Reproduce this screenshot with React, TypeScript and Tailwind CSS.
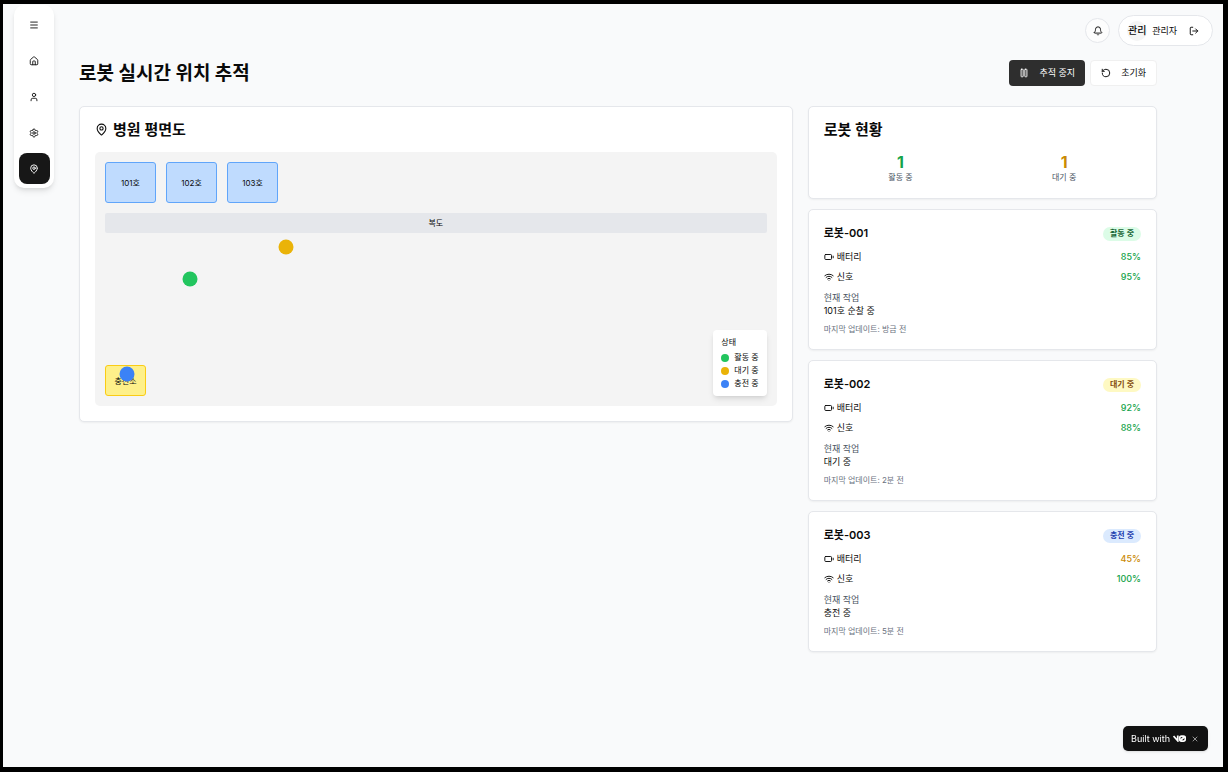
import React from "react";
import {
  Battery,
  Bell,
  House,
  LogOut,
  MapPin,
  Menu,
  Pause,
  RotateCcw,
  Settings,
  User,
  Wifi,
  X,
} from "lucide-react";

type Status = "active" | "idle" | "charging";

interface Robot {
  id: string;
  name: string;
  status: Status;
  battery: number;
  signal: number;
  task: string;
  updated: string;
  x: number;
  y: number;
}

const statuses: Record<Status, { label: string; dot: string; badge: string }> = {
  active: { label: "활동 중", dot: "bg-[#22c55e]", badge: "bg-[#dcfce7] text-[#166534]" },
  idle: { label: "대기 중", dot: "bg-[#eab308]", badge: "bg-[#fef9c3] text-[#854d0e]" },
  charging: { label: "충전 중", dot: "bg-[#3b82f6]", badge: "bg-[#dbeafe] text-[#1e40af]" },
};

const robots: Robot[] = [
  { id: "1", name: "로봇-001", status: "active", battery: 85, signal: 95, task: "101호 순찰 중", updated: "방금 전", x: 14, y: 50 },
  { id: "2", name: "로봇-002", status: "idle", battery: 92, signal: 88, task: "대기 중", updated: "2분 전", x: 28, y: 37.5 },
  { id: "3", name: "로봇-003", status: "charging", battery: 45, signal: 100, task: "충전 중", updated: "5분 전", x: 4.7, y: 87.5 },
];

const rooms = ["101호", "102호", "103호"];

const navItems = [
  { label: "메뉴", Icon: Menu },
  { label: "홈", Icon: House },
  { label: "사용자", Icon: User },
  { label: "설정", Icon: Settings },
  { label: "위치 추적", Icon: MapPin, current: true },
];

const cardClass = "rounded-[5px] border border-[#e5e7eb] bg-white p-[15px] shadow-xs";

function Sidebar() {
  return (
    <nav className="mt-px ml-[11px] flex w-10 shrink-0 flex-col items-center gap-[5px] self-start rounded-[10px] bg-white py-1 shadow-md">
      {navItems.map(({ label, Icon, current }) => (
        <button
          key={label}
          type="button"
          aria-label={label}
          className={
            current
              ? "flex size-[31px] items-center justify-center rounded-[8px] bg-[#171717] text-white"
              : "flex size-[31px] items-center justify-center rounded-[8px] text-[#171717]"
          }
        >
          <Icon size={10} strokeWidth={2.25} />
        </button>
      ))}
    </nav>
  );
}

function Header() {
  return (
    <header className="flex items-center justify-end gap-2 pr-[10px]">
      <button
        type="button"
        aria-label="알림"
        className="flex size-[25px] items-center justify-center rounded-full border border-[#e5e7eb] bg-white/60"
      >
        <Bell size={10} strokeWidth={2.25} />
      </button>
      <div className="flex h-[31px] items-center rounded-full border border-[#e5e7eb] bg-white pr-[13px] pl-2">
        <span className="flex size-5 items-center justify-center rounded-full bg-[#f5f5f5] text-[10px] font-medium whitespace-nowrap">
          관리
        </span>
        <span className="ml-[5px] text-[9px]">관리자</span>
        <button type="button" aria-label="로그아웃" className="ml-3">
          <LogOut size={10} strokeWidth={2.25} />
        </button>
      </div>
    </header>
  );
}

function FloorPlan() {
  return (
    <section className={`${cardClass} col-span-2 self-start`}>
      <h2 className="flex items-center gap-[5px] text-[15px] leading-[15px] font-semibold">
        <MapPin size={13} />
        병원 평면도
      </h2>
      <div className="relative mt-[15px] flex h-[254px] flex-col rounded-[5px] bg-[#f4f4f4] p-[10px] text-[8px]">
        <div className="flex gap-[10px]">
          {rooms.map((room) => (
            <div
              key={room}
              className="flex h-[41px] w-[51px] items-center justify-center rounded-[3px] border border-[#60a5fa] bg-[#bfdbfe]"
            >
              {room}
            </div>
          ))}
        </div>
        <div className="mt-[10px] flex h-5 items-center justify-center rounded-[2px] bg-[#e5e7eb]">복도</div>
        <div className="mt-auto flex items-end justify-between">
          <div className="flex h-[31px] w-[41px] items-center justify-center rounded-[3px] border border-[#facc15] bg-[#fef08a]">
            충전소
          </div>
          <div className="rounded-[4px] bg-white px-2 py-[6px] shadow-md">
            <div className="leading-[13px]">상태</div>
            <ul className="mt-[2px]">
              {Object.values(statuses).map((status) => (
                <li key={status.label} className="flex items-center gap-[5px] leading-[13px]">
                  <span className={`size-2 rounded-full ${status.dot}`} />
                  {status.label}
                </li>
              ))}
            </ul>
          </div>
        </div>
        {robots.map((robot) => (
          <span
            key={robot.id}
            role="img"
            aria-label={robot.name}
            className={`absolute size-[15px] -translate-x-1/2 -translate-y-1/2 rounded-full ${statuses[robot.status].dot}`}
            style={{ left: `${robot.x}%`, top: `${robot.y}%` }}
          />
        ))}
      </div>
    </section>
  );
}

function Summary() {
  return (
    <section className={cardClass}>
      <h2 className="text-[15px] leading-[15px] font-semibold">로봇 현황</h2>
      <div className="mt-[15px] grid grid-cols-2 gap-[10px] text-center">
        <div>
          <div className="text-[16px] leading-5 font-bold text-[#16a34a]">1</div>
          <div className="text-[8px] leading-[11px] text-[#4b5563]">활동 중</div>
        </div>
        <div>
          <div className="text-[16px] leading-5 font-bold text-[#ca8a04]">1</div>
          <div className="text-[8px] leading-[11px] text-[#4b5563]">대기 중</div>
        </div>
      </div>
    </section>
  );
}

function levelColor(level: number) {
  return level > 60 ? "text-[#16a34a]" : "text-[#ca8a04]";
}

function RobotCard({ robot }: { robot: Robot }) {
  const status = statuses[robot.status];
  return (
    <article className={`${cardClass} text-[9px] leading-[13px]`}>
      <div className="flex h-[17px] items-center justify-between">
        <h3 className="text-[11px] font-semibold">{robot.name}</h3>
        <span className={`flex h-[14px] items-center rounded-full px-[7px] text-[8px] font-semibold ${status.badge}`}>
          {status.label}
        </span>
      </div>
      <div className="mt-2 flex items-center justify-between">
        <span className="flex items-center gap-[3px]">
          <Battery size={10} strokeWidth={2.25} />
          배터리
        </span>
        <span className={`font-medium ${levelColor(robot.battery)}`}>{robot.battery}%</span>
      </div>
      <div className="mt-[7px] flex items-center justify-between">
        <span className="flex items-center gap-[3px]">
          <Wifi size={10} strokeWidth={2.25} />
          신호
        </span>
        <span className={`font-medium ${levelColor(robot.signal)}`}>{robot.signal}%</span>
      </div>
      <div className="mt-2 text-[#4b5563]">현재 작업</div>
      <div>{robot.task}</div>
      <div className="mt-[7px] text-[8px] leading-[10px] text-[#6b7280]">마지막 업데이트: {robot.updated}</div>
    </article>
  );
}

export default function App() {
  return (
    <div className="flex min-h-screen bg-black pt-1 pr-[5px] pb-[5px] pl-[3px] font-['Inter','Noto_Sans_CJK_KR',sans-serif] text-[#0a0a0a]">
      <div className="flex min-w-0 flex-1 bg-[#f9fafb]">
        <Sidebar />
        <div className="min-w-0 flex-1 pt-[11px]">
          <Header />
          <main className="mt-[14px] pr-[66px] pb-10 pl-[25px]">
            <div className="flex items-center justify-between">
              <h1 className="text-[19px] leading-[25px] font-bold">로봇 실시간 위치 추적</h1>
              <div className="flex gap-[5px] text-[9px]">
                <button
                  type="button"
                  className="flex h-[26px] items-center gap-[11px] rounded-[4px] bg-[#2e2e2e] px-[10px] text-white"
                >
                  <Pause size={10} strokeWidth={2.25} />
                  추적 중지
                </button>
                <button
                  type="button"
                  className="flex h-[26px] items-center gap-[10px] rounded-[4px] border border-[#f0f0f0] bg-white px-[10px]"
                >
                  <RotateCcw size={10} strokeWidth={2.25} />
                  초기화
                </button>
              </div>
            </div>
            <div className="mt-5 grid grid-cols-3 gap-[15px]">
              <FloorPlan />
              <div className="flex flex-col gap-[10px]">
                <Summary />
                {robots.map((robot) => (
                  <RobotCard key={robot.id} robot={robot} />
                ))}
              </div>
            </div>
          </main>
        </div>
      </div>
      <div className="fixed right-5 bottom-[21px] flex h-[25px] items-center rounded-[5px] bg-[#121212] pr-[9px] pl-2 text-[9px] text-white shadow-sm">
        <a href="#v0" aria-label="v0" className="flex items-center gap-[3px]">
          Built with
          <svg width="13" height="7" viewBox="0 0 26 14" fill="none" stroke="currentColor" strokeWidth="3.5">
            <path d="M1 2 9.5 11.5V1" />
            <rect x="13.5" y="2" width="11" height="10" rx="3.5" />
            <path d="M14.5 11 23.5 3" />
          </svg>
        </a>
        <button type="button" aria-label="닫기" className="ml-[5px] text-[#d4d4d4]">
          <X size={8} />
        </button>
      </div>
    </div>
  );
}
